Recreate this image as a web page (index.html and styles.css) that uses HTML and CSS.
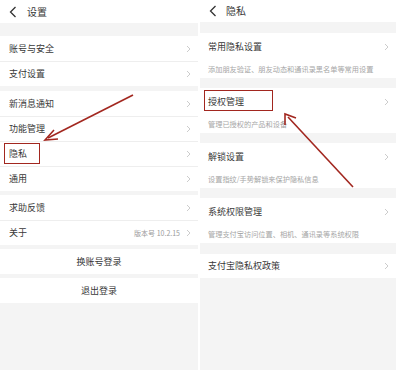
FILE: index.html
```html
<!DOCTYPE html>
<html>
<head>
  <title>设置与隐私</title>
  <link rel="stylesheet" href="styles.css">
</head>
<body>
  <div class="shots">
    <div class="screen settings">
      <div class="topbar">
        <svg class="back" width="8" height="12" viewBox="0 0 8 12"><polyline points="6.5,1 1.5,6 6.5,11"/></svg>
        <span class="topbar-title">设置</span>
      </div>
      <div class="group first">
        <div class="row"><span class="label">账号与安全</span><svg class="chev" width="5" height="8" viewBox="0 0 5 8"><polyline points="1,1 4,4 1,7"/></svg></div>
        <div class="row"><span class="label">支付设置</span><svg class="chev" width="5" height="8" viewBox="0 0 5 8"><polyline points="1,1 4,4 1,7"/></svg></div>
      </div>
      <div class="group g5">
        <div class="row"><span class="label">新消息通知</span><svg class="chev" width="5" height="8" viewBox="0 0 5 8"><polyline points="1,1 4,4 1,7"/></svg></div>
        <div class="row"><span class="label">功能管理</span><svg class="chev" width="5" height="8" viewBox="0 0 5 8"><polyline points="1,1 4,4 1,7"/></svg></div>
        <div class="row marked"><span class="label">隐私</span><span class="mark mark-privacy"></span><svg class="chev" width="5" height="8" viewBox="0 0 5 8"><polyline points="1,1 4,4 1,7"/></svg></div>
        <div class="row"><span class="label">通用</span><svg class="chev" width="5" height="8" viewBox="0 0 5 8"><polyline points="1,1 4,4 1,7"/></svg></div>
      </div>
      <div class="group">
        <div class="row"><span class="label">求助反馈</span><svg class="chev" width="5" height="8" viewBox="0 0 5 8"><polyline points="1,1 4,4 1,7"/></svg></div>
        <div class="row"><span class="label">关于</span><span class="value">版本号 10.2.15</span><svg class="chev" width="5" height="8" viewBox="0 0 5 8"><polyline points="1,1 4,4 1,7"/></svg></div>
      </div>
      <div class="button-row">换账号登录</div>
      <div class="button-row last">退出登录</div>
    </div>

    <div class="screen privacy">
      <div class="topbar">
        <svg class="back" width="8" height="12" viewBox="0 0 8 12"><polyline points="6.5,1 1.5,6 6.5,11"/></svg>
        <span class="topbar-title">隐私</span>
      </div>
      <div class="item first">
        <div class="item-title"><span class="label">常用隐私设置</span><svg class="chev" width="5" height="8" viewBox="0 0 5 8"><polyline points="1,1 4,4 1,7"/></svg></div>
        <div class="item-desc">添加朋友验证、朋友动态和通讯录黑名单等常用设置</div>
      </div>
      <div class="item">
        <div class="item-title marked"><span class="label">授权管理</span><span class="mark mark-auth"></span><svg class="chev" width="5" height="8" viewBox="0 0 5 8"><polyline points="1,1 4,4 1,7"/></svg></div>
        <div class="item-desc">管理已授权的产品和设备</div>
      </div>
      <div class="item">
        <div class="item-title"><span class="label">解锁设置</span><svg class="chev" width="5" height="8" viewBox="0 0 5 8"><polyline points="1,1 4,4 1,7"/></svg></div>
        <div class="item-desc">设置指纹/手势解锁来保护隐私信息</div>
      </div>
      <div class="item">
        <div class="item-title"><span class="label">系统权限管理</span><svg class="chev" width="5" height="8" viewBox="0 0 5 8"><polyline points="1,1 4,4 1,7"/></svg></div>
        <div class="item-desc">管理支付宝访问位置、相机、通讯录等系统权限</div>
      </div>
      <div class="item single">
        <div class="item-title"><span class="label">支付宝隐私权政策</span><svg class="chev" width="5" height="8" viewBox="0 0 5 8"><polyline points="1,1 4,4 1,7"/></svg></div>
      </div>
    </div>

    <svg class="arrows" width="400" height="374" viewBox="0 0 400 374">
      <line x1="133" y1="95" x2="48" y2="138"/>
      <polyline points="54,130 45,140 58,139"/>
      <line x1="353" y1="187" x2="288" y2="117"/>
      <polyline points="285,125 285,114 296,118"/>
    </svg>
  </div>
</body>
</html>
```

FILE: styles.css
```css
html, body {
  margin: 0;
  padding: 0;
  background: #fff;
}
body {
  font-family: "Noto Sans CJK SC", "Noto Sans", sans-serif;
  color: #383838;
}
.shots {
  --page-bg: #f4f4f4;
  --line: #eeeeee;
  --mark: #a2271f;

  position: relative;
  display: flex;
  gap: 2px;
  width: 400px;
  height: 374px;
}
.screen {
  background: var(--page-bg);
  height: 370px;
  display: flex;
  flex-direction: column;
}
.settings {
  width: 198px;
}
.privacy {
  width: 196px;
}
.topbar {
  background: #fff;
  height: 23px;
  display: flex;
  align-items: center;
  padding-left: 9px;
  gap: 10px;
  flex-shrink: 0;
}
.privacy .topbar {
  height: 22px;
  gap: 9px;
}
.back {
  fill: none;
  stroke: #333;
  stroke-width: 1.3;
}
.topbar-title {
  font-size: 10px;
  line-height: 12px;
}
.group {
  background: #fff;
  margin-top: 4px;
}
.group.first {
  margin-top: 13px;
}
.group.g5 {
  margin-top: 5px;
}
.row {
  position: relative;
  height: 25px;
  display: flex;
  align-items: center;
  padding: 0 7px 0 9px;
  font-size: 9px;
  border-top: 1px solid var(--line);
  box-sizing: border-box;
}
.row:first-child {
  border-top: none;
}
.label {
  flex: 1;
  line-height: 12px;
}
.value {
  font-size: 7px;
  color: #9a9a9a;
  margin-right: 6px;
}
.chev {
  fill: none;
  stroke: #c6c6c6;
  stroke-width: 0.9;
}
.button-row {
  background: #fff;
  height: 25px;
  margin-top: 4px;
  display: flex;
  align-items: center;
  justify-content: center;
  font-size: 9px;
}
.item {
  background: #fff;
  margin-top: 10px;
}
.item.first {
  margin-top: 11px;
}
.item.single {
  margin-top: 11px;
}
.item-title {
  position: relative;
  height: 27px;
  display: flex;
  align-items: center;
  padding: 0 7px 0 8px;
  font-size: 9px;
}
.single .item-title {
  height: 24px;
}
.item-desc {
  height: 18px;
  display: flex;
  align-items: center;
  padding-left: 8px;
  font-size: 7.2px;
  color: #a6a6a6;
  white-space: nowrap;
}
.mark {
  position: absolute;
  border: 1.5px solid var(--mark);
  box-sizing: border-box;
}
.mark-privacy {
  left: 4px;
  top: 1px;
  width: 36px;
  height: 21px;
}
.mark-auth {
  left: 4px;
  top: 2px;
  width: 69px;
  height: 21px;
}
.arrows {
  position: absolute;
  left: 0;
  top: 0;
  fill: none;
  stroke: var(--mark);
  stroke-width: 1.6;
  stroke-linejoin: miter;
}
```
